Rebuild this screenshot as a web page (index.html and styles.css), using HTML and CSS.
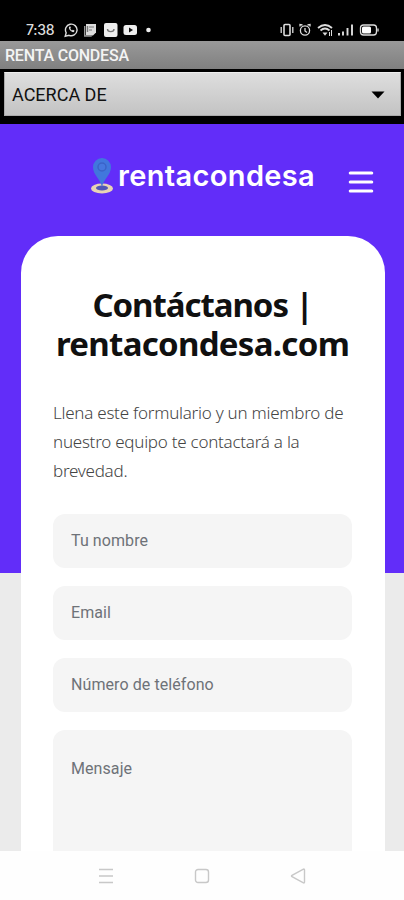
FILE: index.html
```html
<!DOCTYPE html>
<html lang="es">
<head>
<meta charset="utf-8">
<title>Renta Condesa</title>
<link rel="stylesheet" href="styles.css">
</head>
<body>
<div class="phone">
  <header class="status">
    <span class="clock">7:38</span>
    <svg class="status-left" width="92" height="16" viewBox="0 0 92 16" fill="none" stroke="#ddd" stroke-width="1.4">
      <path d="M1.200 14.200l1-3.400A5.800 5.800 0 1 1 5 13.300z"/>
      <path d="M5 5c-.8 2 3 6 5 5l.5-1.600-1.700-.7-.9.8-1.600-1.700.6-1-.7-1.500z" fill="#ddd" stroke="none"/>
      <path d="M22 2h10v8.500l-3 3h-7z" fill="#ddd" stroke="none"/><path d="M20.700 4v10h7M25 5h5M25 8h3" stroke="#999"/><path d="M23.500 4v6" stroke="#777"/>
      <rect x="40" y="1" width="13.500" height="14" rx="2" fill="#eee" stroke="none"/><path d="M43.500 7c0 3.500 6.500 3.500 6.500 0" stroke="#777"/>
      <rect x="59.500" y="3" width="13.500" height="10" rx="2.500" fill="#eee" stroke="none"/><path d="M65 5.600l4 2.400-4 2.400z" fill="#111" stroke="none"/>
      <circle cx="84.500" cy="8" r="2.300" fill="#eee" stroke="none"/>
    </svg>
    <svg class="status-right" width="102" height="16" viewBox="0 0 102 16" fill="none" stroke="#ddd" stroke-width="1.3">
      <rect x="4" y="2.500" width="6" height="11" rx="1" stroke-width="1.600"/><path d="M1.200 5v6M12.800 5v6"/>
      <circle cx="25" cy="8.500" r="4.600"/><path d="M25 6v3l2 1.500M20 4.500V2.500l2.500.5M27.500 3l2.500-.5v2"/>
      <path d="M38 6q7-6 14 0M40.500 8.500q4.500-4 9 0" stroke-width="1.800"/><path d="M42.500 10.500h5L45 13.700z" fill="#ddd" stroke="none"/><path d="M51.500 8v6M49.500 10v4" stroke-width="1"/>
      <path d="M59 11v2.500M63 9.500v4M67.500 6v7.500M72 2.500v11" stroke-width="1.900"/>
      <rect x="80.500" y="3" width="16" height="10" rx="3"/><rect x="82" y="4.500" width="9" height="7" rx="1.500" fill="#fff" stroke="none"/><path d="M98 6.500v3"/>
    </svg>
  </header>
  <div class="titlebar">RENTA CONDESA</div>
  <div class="picker"><div class="select"><span>ACERCA DE</span><svg width="14" height="8" viewBox="0 0 14 8"><path d="M.5.5h13L7 7.500z"/></svg></div></div>
  <main class="page">
    <div class="brand">
      <svg class="pin" width="24" height="38" viewBox="0 0 24 38">
        <ellipse cx="12" cy="31.500" rx="11" ry="5" fill="#e8d3b5"/>
        <ellipse cx="12" cy="31" rx="6" ry="2.400" fill="#5157b5"/>
        <path d="M12 30C10.500 22 3 18 3 10a9 9 0 0 1 18 0c0 8-7.500 12-9 20z" fill="#4177dd"/>
        <circle cx="12" cy="10" r="4" fill="#4677df" stroke="#3b63c8" stroke-width="1.500"/>
      </svg>
      <span class="name">rentacondesa</span>
      <svg class="menu" width="26" height="24" viewBox="0 0 26 24" stroke="#fff" stroke-width="3.200" stroke-linecap="round"><path d="M2.300 3h21.400M2.300 12h21.400M2.300 21h21.400"/></svg>
    </div>
    <section class="card">
      <h1><span class="h-top">Contáctanos |</span><span class="h-bottom">rentacondesa.com</span></h1>
      <p>Llena este formulario y un miembro de<br>nuestro equipo te contactará a la<br>brevedad.</p>
      <form class="fields">
        <div class="field">Tu nombre</div>
        <div class="field">Email</div>
        <div class="field">Número de teléfono</div>
        <div class="field area">Mensaje</div>
      </form>
    </section>
  </main>
  <nav class="nav">
    <svg width="16" height="16" viewBox="0 0 16 16"><path d="M1 1.500h14M1 8h14M1 14.500h14"/></svg>
    <svg width="16" height="16" viewBox="0 0 16 16"><rect x="1.500" y="1.500" width="13" height="13" rx="2.500"/></svg>
    <svg width="16" height="16" viewBox="0 0 16 16"><path d="M14.500 2v12q0 1.500-1.500.7L2 8.700q-1-.7 0-1.400l11-6q1.500-.8 1.500.7z"/></svg>
  </nav>
</div>
</body>
</html>
```
FILE: styles.css
```css
* { box-sizing: border-box; }
body { margin: 0; font-family: Roboto, sans-serif; background: #fff; }
.phone { width: 404px; height: 900px; overflow: hidden; display: flex; flex-direction: column; }
.status { height: 41px; flex: none; background: #000; display: flex; align-items: flex-start; padding: 22px 22px 0 26px; color: #ddd; }
.clock { font: 500 14px/16px Inter, sans-serif; width: 38px; white-space: nowrap; letter-spacing: -.3px; }
.status-right { margin-left: auto; }
.titlebar { height: 28px; flex: none; background: linear-gradient(#999, #808080); color: #f4f4f4; font-size: 16px; font-weight: 500; line-height: 29px; padding-left: 5px; letter-spacing: -.2px; }
.picker { height: 55px; flex: none; background: #000; padding: 3px 3px 8px 4px; }
.select { height: 44px; background: linear-gradient(#dedede, #c3c3c3); border: 1px solid #aaa; border-top-color: #eee; display: flex; align-items: center; justify-content: space-between; padding: 1px 15px 0 7px; font-size: 18px; color: #111; }
.page { height: 727px; flex: none; overflow: hidden; background: linear-gradient(#622df9 449px, #ebebeb 449px); padding: 0 19px 0 21px; }
.brand { height: 112px; display: flex; align-items: flex-start; padding: 33px 11px 0 69px; }
.name { font: 600 29px/36px Inter, sans-serif; color: #fff; margin: 1px 0 0 4px; letter-spacing: .35px; width: 198px; white-space: nowrap; }
.menu { margin: 13px 0 0 auto; }
.card { background: #fff; border-radius: 37px; height: 800px; padding: 49px 33px 0 32px; }
h1 { margin: 0 -10px; text-align: center; font: 700 33px/39px "Noto Sans", sans-serif; color: #101010; white-space: nowrap; }
h1 span { display: block; }
.h-top { letter-spacing: -1.05px; }
.h-bottom { letter-spacing: -.7px; }
p { margin: 35px 0 0; font: 300 17px/29px "Noto Sans", sans-serif; color: #444; white-space: nowrap; letter-spacing: -.25px; }
.fields { margin-top: 29px; display: flex; flex-direction: column; gap: 18px; }
.field { height: 54px; border-radius: 12px; background: #f5f5f5; padding-left: 18px; font-size: 16px; line-height: 54px; color: #6e7278; letter-spacing: .08px; }
.area { height: 180px; padding-top: 12px; }
.nav { height: 49px; flex: none; background: #fefefe; display: flex; justify-content: center; align-items: center; gap: 80px; }
.nav svg { fill: none; stroke: #c8c8c8; stroke-width: 1.4; }
```
